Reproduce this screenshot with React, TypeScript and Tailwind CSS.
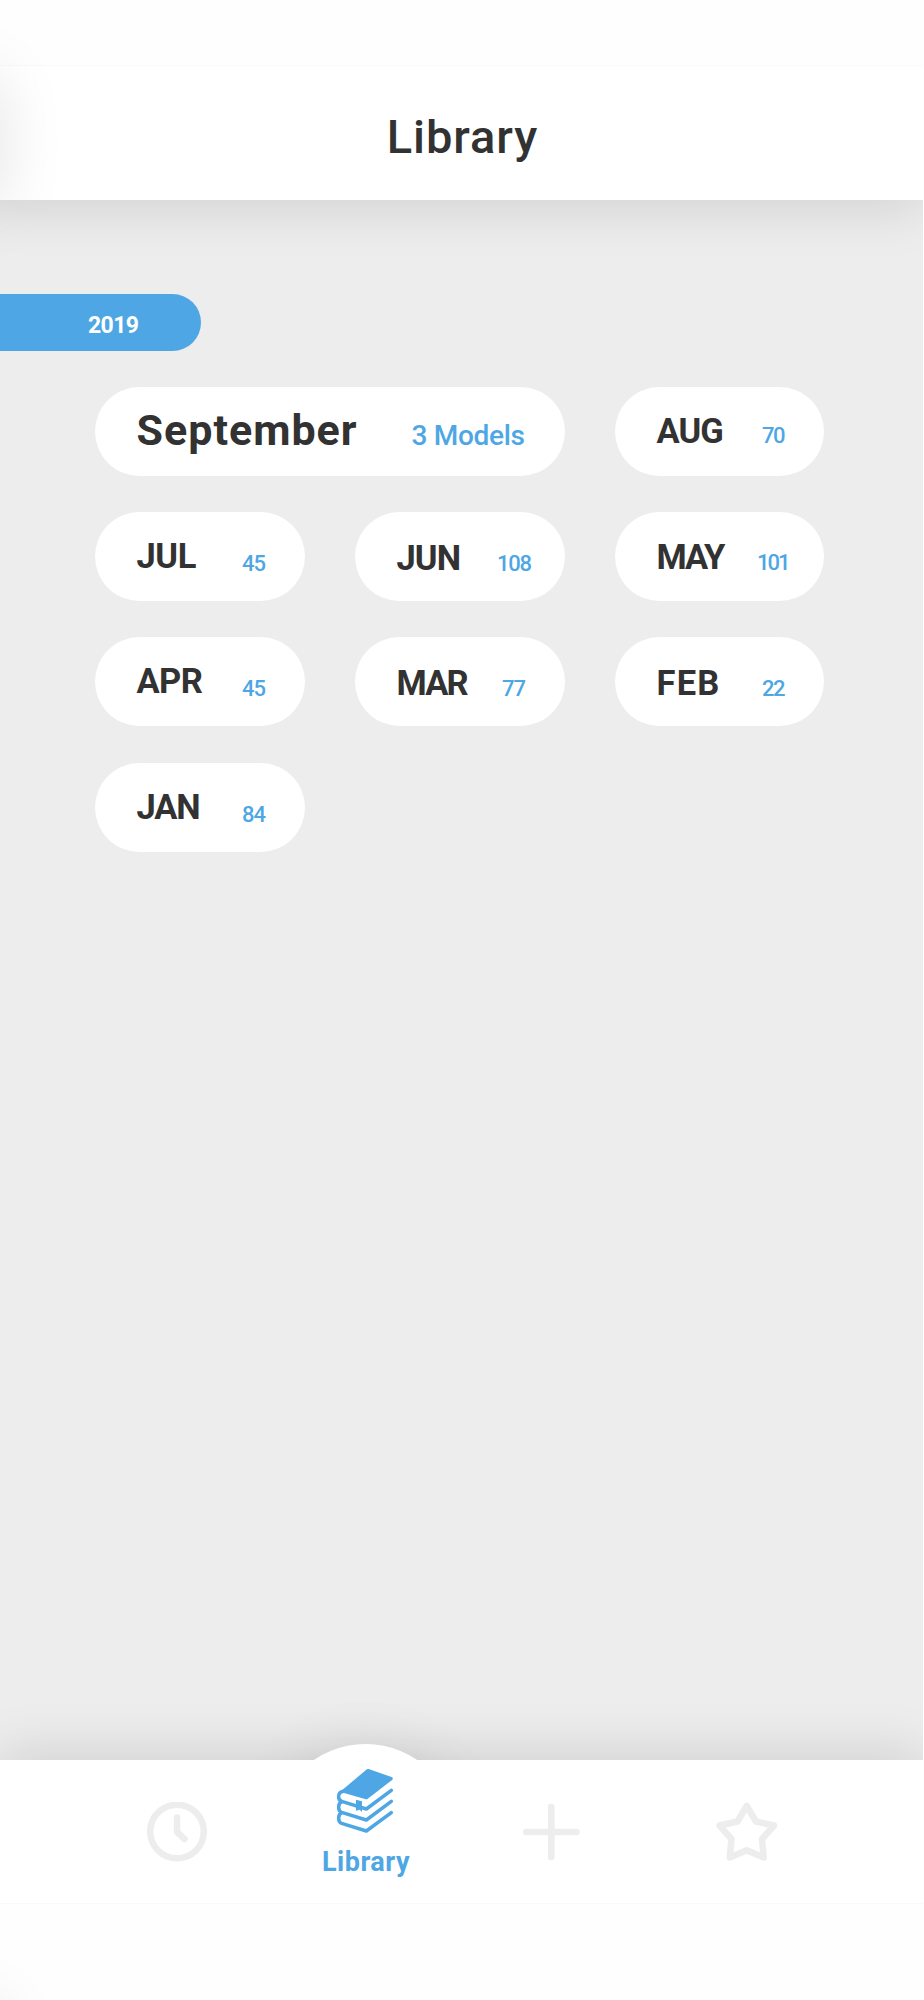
import clsx from "clsx";

interface IMonth {
    name: string;
    count: string;
    nameClass: string;
    countClass: string;
}

const months: IMonth[] = [
    {name: "AUG", count: "70", nameClass: "mt-[27px] tracking-[-0.9px]", countClass: "top-[38px] left-[147px] tracking-[-1.4px]"},
    {name: "JUL", count: "45", nameClass: "mt-[27px] tracking-[-0.4px]", countClass: "top-[41px] left-[147px] tracking-[-1px]"},
    {name: "JUN", count: "108", nameClass: "mt-[29px] tracking-[-0.9px]", countClass: "top-[41px] left-[142px] tracking-[-1.2px]"},
    {name: "MAY", count: "101", nameClass: "mt-[28px] tracking-[-2px]", countClass: "top-[40px] left-[142px] tracking-[-2px]"},
    {name: "APR", count: "45", nameClass: "mt-[27px] tracking-[-0.6px]", countClass: "top-[41px] left-[147px] tracking-[-1px]"},
    {name: "MAR", count: "77", nameClass: "mt-[29px] tracking-[-1.8px]", countClass: "top-[41px] left-[147px] tracking-[-1px]"},
    {name: "FEB", count: "22", nameClass: "mt-[29px] tracking-[1.2px]", countClass: "top-[41px] left-[147px] tracking-[-1.4px]"},
    {name: "JAN", count: "84", nameClass: "mt-[27px] tracking-[-1.2px]", countClass: "top-[41px] left-[147px] tracking-[-1px]"},
];

function MonthPill({month}: {month: IMonth}) {
    return (
        <button className="relative flex items-start h-[89px] rounded-full bg-white text-left leading-none">
            <span className={clsx("ml-[41.5px] text-[34.5px] leading-none font-bold text-[#323232]", month.nameClass)}>{month.name}</span>
            <span className={clsx("absolute text-[22px] leading-none font-medium text-[#4ea7e4]", month.countClass)}>{month.count}</span>
        </button>
    )
}

function BooksIcon() {
    return (
        <svg className="-ml-[2px]" width="58" height="66" viewBox="109 114 174 198" fill="none" stroke="#4ea7e4" strokeWidth="10.5" strokeLinecap="round" strokeLinejoin="round">
            <path d="M205 122L274 146L200 203L132 183Z" fill="#4ea7e4" />
            <path d="M131 184C113 187 113 210 126 214L200 237L275 181" />
            <path d="M126 215C114 221 114 242 126 247L200 270L275 214" />
            <path d="M126 248C114 254 114 275 126 280L200 303L275 248" />
            <path d="M169 209L187 214V246L180 239L169 242Z" fill="#4ea7e4" stroke="none" />
        </svg>
    )
}

export default function App() {
    return (
        <div className="relative w-[924px] h-[2000px] overflow-hidden flex flex-col bg-[#fefefe] font-[Roboto,sans-serif]">
            <div className="h-[65px] shrink-0" />
            <div className="relative w-[923px] h-[1839px] flex flex-col overflow-hidden bg-[#ededed]">
                <header className="relative h-[134.5px] shrink-0 flex justify-center border-t border-[#f9f9f9] bg-white shadow-[0_6px_56px_rgba(0,0,0,0.13)]">
                    <h1 className="mt-[47px] ml-[2px] text-[47px] leading-none font-medium tracking-[0.95px] text-[#323232]">Library</h1>
                </header>
                <main className="grow flex flex-col pt-[94.5px]">
                    <div className="w-[201px] h-[56.5px] shrink-0 rounded-r-full bg-[#4ea7e4] pl-[88px] pt-[19.5px] text-[23px] leading-none font-bold tracking-[-0.6px] text-white">2019</div>
                    <div className="grid grid-cols-[210px_210px_209px] gap-x-[50px] gap-y-[36.2px] pl-[95px] mt-[36.5px]">
                        <button className="relative col-span-2 flex items-start h-[89px] rounded-full bg-white text-left">
                            <span className="mt-[22px] ml-[41.5px] text-[43px] leading-none font-bold tracking-[1px] text-[#323232]">September</span>
                            <span className="absolute top-[35px] left-[316.5px] text-[28px] leading-none font-medium tracking-[-0.3px] text-[#4ea7e4] whitespace-nowrap">3 Models</span>
                        </button>
                        {months.map((month) => <MonthPill key={month.name} month={month} />)}
                    </div>
                </main>
                <nav className="relative h-[144.5px] shrink-0">
                    {/* raised bump behind the active tab */}
                    <div className="absolute left-[274px] top-[-16px] size-[183px] rounded-full shadow-[0_0_60px_rgba(0,0,0,0.07)]" />
                    <div className="absolute inset-0 bg-white shadow-[0_-6px_56px_rgba(0,0,0,0.13)]" />
                    <div className="absolute left-[274px] top-[-16px] size-[183px] rounded-full bg-white" />
                    <div className="relative h-full flex items-start border-b border-[#f9f9f9]">
                        <button className="ml-[147px] mt-[42px]">
                            <svg width="60" height="60" viewBox="0 0 60 60" fill="none" stroke="#ededed" strokeWidth="6.5" strokeLinecap="round" strokeLinejoin="round">
                                <circle cx="30" cy="29.5" r="26.8" />
                                <path d="M30 15.5V30L37.5 37" />
                            </svg>
                        </button>
                        <button className="ml-[106px] mt-[8px] w-[106px] flex flex-col items-center">
                            <BooksIcon />
                            <span className="mt-[15px] text-[27px] leading-none font-bold tracking-[0.5px] text-[#4ea7e4]">Library</span>
                        </button>
                        <button className="ml-[103px] mt-[43px]">
                            <svg width="58" height="58" viewBox="0 0 58 58" fill="none" stroke="#ededed" strokeWidth="6.6" strokeLinecap="round">
                                <path d="M29.3 4V54M4.3 29H54.3" />
                            </svg>
                        </button>
                        <button className="ml-[136px] mt-[42px]">
                            <svg width="62" height="60" viewBox="0 0 62 60" fill="none" stroke="#ededed" strokeWidth="6.5" strokeLinecap="round" strokeLinejoin="round">
                                <path d="M30.7 3.8L40 19.5L58 23.5L46 37L47.7 55.5L30.7 48.2L13.7 55.5L15.5 37L3.5 23.5L21.5 19.5Z" />
                            </svg>
                        </button>
                    </div>
                </nav>
            </div>
            {/* shadows cast in from the left edge */}
            <div className="absolute left-[-66px] top-[80px] w-[60px] h-[125px] shadow-[0_0_70px_rgba(0,0,0,0.14)]" />
            <div className="absolute left-[-66px] top-[2010px] w-[60px] h-[125px] shadow-[0_0_70px_rgba(0,0,0,0.14)]" />
        </div>
    )
}
